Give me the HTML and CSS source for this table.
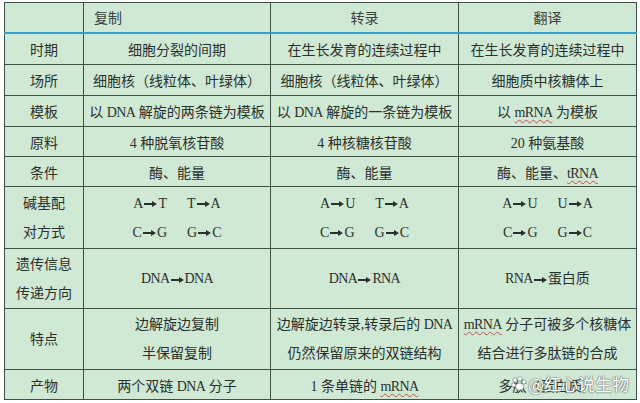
FILE: index.html
```html
<!DOCTYPE html>
<html lang="zh">
<head>
<meta charset="utf-8">
<title>复制 转录 翻译 比较</title>
<link rel="stylesheet" href="styles.css">
</head>
<body>
<div class="sheet">
<table class="cmp">
  <colgroup><col class="c0"><col class="c1"><col class="c2"><col class="c3"></colgroup>
  <thead>
    <tr class="h30"><th></th><th class="left">复制</th><th>转录</th><th>翻译</th></tr>
  </thead>
  <tbody>
    <tr class="h33"><td>时期</td><td>细胞分裂的间期</td><td>在生长发育的连续过程中</td><td>在生长发育的连续过程中</td></tr>
    <tr class="h31"><td>场所</td><td>细胞核（线粒体、叶绿体）</td><td>细胞核（线粒体、叶绿体）</td><td>细胞质中核糖体上</td></tr>
    <tr class="h31"><td>模板</td><td>以 <span class="lat">DNA</span> 解旋的两条链为模板</td><td>以 <span class="lat">DNA</span> 解旋的一条链为模板</td><td>以 <span class="sq lat">mRNA</span> 为模板</td></tr>
    <tr class="h30"><td>原料</td><td>4 种脱氧核苷酸</td><td>4 种核糖核苷酸</td><td>20 种氨基酸</td></tr>
    <tr class="h30"><td>条件</td><td>酶、能量</td><td>酶、能量</td><td>酶、能量、<span class="sq lat">tRNA</span></td></tr>
    <tr class="h62 two">
      <td>碱基配<br>对方式</td>
      <td><span class="pr">A<i class="arr"></i>T</span><span class="pr">T<i class="arr"></i>A</span><br><span class="pr">C<i class="arr"></i>G</span><span class="pr">G<i class="arr"></i>C</span></td>
      <td><span class="pr">A<i class="arr"></i>U</span><span class="pr">T<i class="arr"></i>A</span><br><span class="pr">C<i class="arr"></i>G</span><span class="pr">G<i class="arr"></i>C</span></td>
      <td><span class="pr">A<i class="arr"></i>U</span><span class="pr">U<i class="arr"></i>A</span><br><span class="pr">C<i class="arr"></i>G</span><span class="pr">G<i class="arr"></i>C</span></td>
    </tr>
    <tr class="h60 two">
      <td>遗传信息<br>传递方向</td>
      <td><span class="lat">DNA</span><i class="arr"></i><span class="lat">DNA</span></td>
      <td><span class="lat">DNA</span><i class="arr"></i><span class="lat">RNA</span></td>
      <td><span class="lat">RNA</span><i class="arr"></i>蛋白质</td>
    </tr>
    <tr class="h61 two">
      <td>特点</td>
      <td>边解旋边复制<br>半保留复制</td>
      <td>边解旋边转录,转录后的 <span class="lat">DNA</span><br>仍然保留原来的双链结构</td>
      <td><span class="sq lat">mRNA</span> 分子可被多个核糖体<br>结合进行多肽链的合成</td>
    </tr>
    <tr class="h30"><td>产物</td><td>两个双链 <span class="lat">DNA</span> 分子</td><td>1 条单链的 <span class="sq lat">mRNA</span></td><td class="wmcell">多肽（蛋白质）<span class="wm"><svg class="paw" width="16" height="16" viewBox="0 0 16 16"><circle cx="4" cy="4" r="2.2"/><circle cx="9" cy="2.8" r="2.2"/><circle cx="13" cy="6" r="2.1"/><circle cx="2.6" cy="9" r="2"/><ellipse cx="8.6" cy="10.6" rx="4" ry="3.6"/></svg>@红心说生物</span></td></tr>
  </tbody>
</table>
</div>
</body>
</html>
```
FILE: styles.css
```css
html, body {
  margin: 0;
  padding: 0;
  background: #ffffff;
}
.sheet {
  padding: 2px 0 0 4px;
}
.cmp {
  border-collapse: collapse;
  table-layout: fixed;
  width: 632px;
  background: #d0e9d5;
  font-family: "Liberation Serif", "Noto Sans CJK SC", serif;
  font-size: 14px;
  color: #2a302c;
  border: 1px solid #3e5147;
}
.c0 { width: 79px; }
.c1 { width: 187px; }
.c2 { width: 188px; }
.c3 { width: 178px; }
.cmp th, .cmp td {
  border: 1px solid #3e5147;
  padding: 0;
  text-align: center;
  vertical-align: middle;
  font-weight: normal;
  white-space: nowrap;
}
.cmp thead th {
  border-bottom: 2px solid #3e9cc0;
  color: #3a403c;
}
.cmp th.left {
  text-align: left;
  padding-left: 10px;
}
.lat {
  letter-spacing: -0.6px;
}
.h30 { height: 30px; }
.h31 { height: 31px; }
.h33 { height: 32px; }
.h60 { height: 60px; }
.h61 { height: 61px; }
.h62 { height: 62px; }
.two td { line-height: 29px; }
.pr {
  display: inline-block;
  margin: 0 10px;
}
.arr {
  display: inline-block;
  position: relative;
  width: 8px;
  height: 2px;
  background: #2a302c;
  vertical-align: middle;
  margin: 0 6px 0 1px;
}
.arr::after {
  content: "";
  position: absolute;
  right: -5px;
  top: -2px;
  border-left: 5px solid #2a302c;
  border-top: 3px solid transparent;
  border-bottom: 3px solid transparent;
}
.sq {
  text-decoration: underline wavy #d24a4a;
  text-decoration-thickness: 1px;
  text-underline-offset: 2px;
}
.wmcell {
  position: relative;
}
.wm {
  position: absolute;
  left: 52px;
  top: 4px;
  display: flex;
  align-items: center;
  gap: 1px;
  font-family: "Noto Sans CJK SC", sans-serif;
  font-size: 17px;
  line-height: 20px;
  color: #ffffff;
  text-shadow: 0 0 1px #6d7871, 0 0 1px #6d7871, 0 0 2px rgba(80, 90, 85, 0.7);
}
.paw {
  fill: #ffffff;
  stroke: #7a857e;
  stroke-width: 0.7;
}
```
